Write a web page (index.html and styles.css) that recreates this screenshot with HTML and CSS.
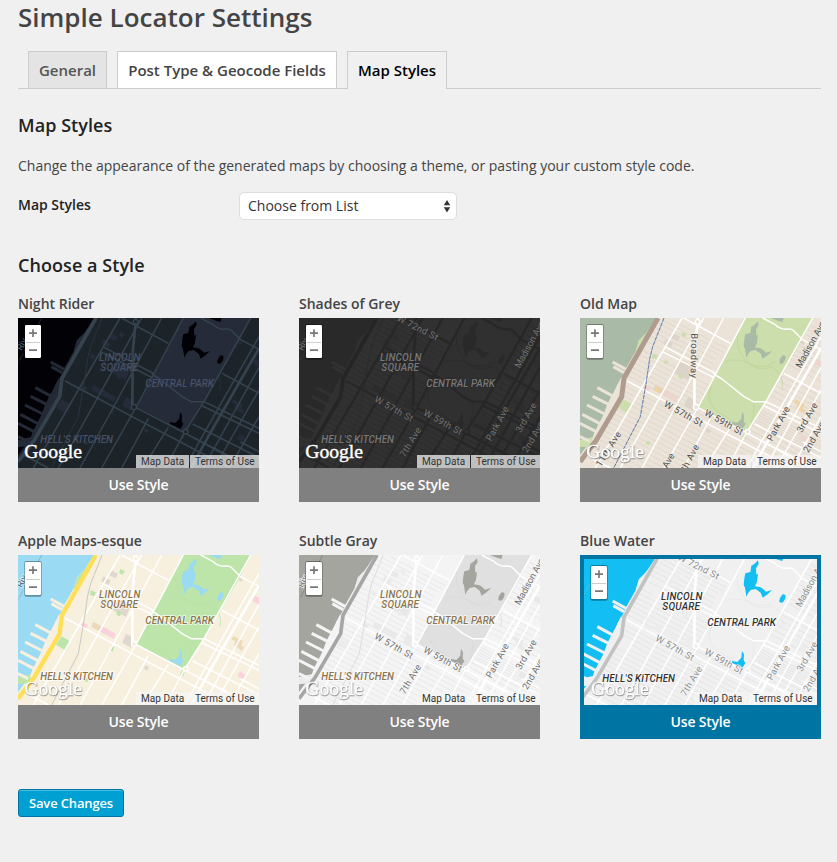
FILE: index.html
```html
<!DOCTYPE html>
<html lang="en">
<head>
<meta charset="utf-8">
<title>Simple Locator Settings</title>
<link rel="stylesheet" href="styles.css">
</head>
<body>
<svg class="defs" aria-hidden="true">
  <defs>
    <!-- Terrain is drawn at three units per pixel -->
    <g id="terrain">
      <path class="land" d="M24 84h730v460H24z"/>
      <path class="minor" d="M200 175 760 472M193 188 760 489M186 202 760 506M178 214 760 523M170 226 760 540M163 238 740 545M160 253 710 545M240 107 430 208M232 119 424 222M225 132 418 235M216 150 410 252M248 93 440 194M270 90 455 188M300 90 462 175M150 283 640 543M150 299 612 544M142 311 580 543M134 324 548 543M126 337 515 543M119 350 483 543M112 363 452 543M105 376 420 543M98 389 388 543M90 401 358 543M82 414 326 543M74 427 294 543M65 439 262 543M55 451 230 543M46 463 198 543M36 475 166 543M715 105 760 129M708 119 760 146M700 133 760 164M680 165 760 207M671 180 760 227M663 194 760 245M655 208 760 263M646 222 760 282M628 257 760 326M620 272 760 345M612 287 760 364M602 301 760 383M593 315 760 402M570 362 760 461M562 376 760 479M554 390 760 497"/>
      <path class="grey" d="m250 285 42 22-6 15-42-23zM306 235l20-25 38 20-16 40-42-22zM348 320l22 12-6 30-28-15zM407 414l10 6-6 11-10-7zM690 152l8 5-4 8-9-6zM280 148l22 12-6 14-22-12zM304 130l20 10-7 14-20-9z"/>
      <path class="tan" d="m252 287 18 9-6 14-18-9zM670 328l28 14-4 14 8 5-6 10-24-16 4-12-12-6z"/>
      <path class="pink" d="m276 297 42 24-7 15-42-23zM218 286l16 8-8 14-15-8zM735 206l12 6v20l-20-10zM690 433l16 10-8 13-16-9z"/>
      <path class="green" d="m330 125 14 8-6 10-10-5zM242 190l16 6-6 12-12-4zM322 250l14 6-7 12-10-5zM278 211l12 4-4 8-10-4zM155 328l25 15-12 28-30-18zM226 452l10 5-5 9-10-5zM518 425l8 5-6 18-10-5zM305 356l8 4-5 14-7-4z"/>
      <path class="park" d="M520 84H722L690 150 582 335 525 428 380 350 430 254z"/>
      <path class="path" d="M500 120q-15 50 20 90t80 20q40 25 30 70M420 290q-30 50 40 90t60 20M460 215q30-10 60 0 50 30 90 0M530 420q20-50 15-85"/>
      <path class="lake" d="M558 94 560 105 552 118 553 137 558 134 555 158 549 172 566 175 576 182 582 188 600 183 587 196 572 206 566 191 551 180 536 183 528 193 523 203 519 176 515 167 517 148 520 133 535 129 538 110 547 105zM632 196q8-1 9 5 0 10-8 19-8 3-11-2-1-10 10-22M510 366l6 10-1 18 5 8-9 15-15-8-16-7v-6l16 3 12-13zM597 84h38l-4 12-11-3z"/>
      <path class="water" d="M24 84H252L222 130 201 151 191 184 162 235 150 262 137 282 120 320 95 380 65 440 24 495z"/>
      <path class="green" d="M246 100 222 130 201 151 191 184 204 185 240 125zM146 265 130 305 118 326 126 330 150 310zM24 450 66 440 60 468 24 472z"/>
      <path class="pier" d="m122 216 40 22M124 230l32 18M76 293l55 30M62 319l60 30M45 345l65 33M31 373l64 34M24 400l54 28M24 440l30 15"/>
      <path class="apron" d="M148 260 134 290 115 325 105 345 94 375 68 425 58 455 80 430 145 320z"/>
      <path class="river" d="M95 84 24 220"/>
      <path class="road" d="M330 84 205 300 70 534M395 84 262 325 145 534M455 84 322 330 210 534M520 84 382 345 275 534M415 385 335 534M475 412 398 534M722 84 582 335 525 425 466 534M747 140 565 460 525 534M747 232 580 534M747 300 612 534M747 380 658 534M165 273 372 383 580 492 660 534M372 350 522 428 727 534M335 84 475 160M278 170 430 250M270 184 425 262M636 250 747 310M582 335 747 415M577 348 747 430M522 428 747 550M548 402 747 503M692 456 747 485M40 495 115 534M572 84l38 20q12 12 30 14 18-3 25 4l25 26 57 30M425 252l25 15 66 53 28 15h38"/>
      <path class="major" d="M377 84v12L368 190 367 345M747 175 600 430 543 534"/>
      <path class="rail-bed" d="M276 84 242 170 233 206 223 275 205 380 125 534"/>
      <path class="rail" d="M276 84 242 170 233 206 223 275 205 380 125 534"/>
      <path class="hwy" d="M258 84 156 265 149 320 72 452 24 515"/>
      <circle class="ring" cx="372" cy="351" r="8"/><circle class="ring" cx="377" cy="95" r="7"/><circle class="ring" cx="527" cy="425" r="7"/>
    </g>
    <g id="zoomer">
      <rect class="zoom-shadow" x="43" y="102" width="52" height="107" rx="6"/>
      <rect class="zoom-box" x="45" y="105" width="48" height="99" rx="4"/>
      <path class="zoom-line" d="M48 157.500h42"/>
      <path class="zoom-sign" d="M57 129.500h24M69 118v23M57 180.500h24"/>
    </g>
  </defs>
</svg>

<main class="wrap">
  <h1>Simple Locator Settings</h1>
  <nav class="tabs">
    <a class="tab t-general">General</a>
    <a class="tab t-fields">Post Type &amp; Geocode Fields</a>
    <a class="tab t-active">Map Styles</a>
  </nav>
  <h2>Map Styles</h2>
  <p class="intro"><span>Change the appearance of the generated maps by choosing a theme, or pasting your custom style code.</span></p>
  <div class="field">
    <span class="field-label">Map Styles</span>
    <div class="select"><span>Choose from List</span>
      <svg width="8" height="13" viewBox="0 0 8 13"><path d="M4 0 7.200 5.200H.8zM4 12.500 7.200 7.300H.8z" fill="#333"/></svg>
    </div>
  </div>
  <h2 class="choose">Choose a Style</h2>

  <section class="grid-cards">
    <article class="card night">
      <h3>Night Rider</h3>
      <div class="map"><svg viewBox="24 84 723 450">
        <use href="#terrain"/>
        <g class="street"><text transform="translate(35 184) rotate(-62)">Riv</text></g>
        <g class="area"><text x="267" y="214" textLength="124">LINCOLN</text><text x="271" y="243" textLength="113">SQUARE</text><text x="406" y="292" textLength="206">CENTRAL PARK</text><text x="91" y="460" textLength="218">HELL'S KITCHEN</text></g>
        <text class="google" x="43" y="503" textLength="173">Google</text>
        <use href="#zoomer"/>
      </svg><div class="credits"><span>Map Data</span><span>Terms of Use</span></div></div>
      <button>Use Style</button>
    </article>

    <article class="card shades">
      <h3>Shades of Grey</h3>
      <div class="map"><svg viewBox="24 84 723 450">
        <use href="#terrain"/>
        <g class="street"><text transform="translate(35 184) rotate(-62)">Riv</text><text transform="translate(316 91) rotate(27)" textLength="134">W 72nd St</text><text transform="translate(248 334) rotate(29)" textLength="128">W 57th St</text><text transform="translate(395 374) rotate(29)" textLength="128">W 59th St</text><text transform="translate(341 503) rotate(-59)" textLength="98">7th Ave</text><text transform="translate(600 455) rotate(-61)" textLength="113">Park Ave</text><text transform="translate(689 430) rotate(-60)" textLength="98">3rd Ave</text><text transform="translate(709 490) rotate(-60)" textLength="102">2nd Ave</text><text transform="translate(686 236) rotate(-61)" textLength="155">Madison Ave</text></g>
        <g class="area"><text x="267" y="214" textLength="124">LINCOLN</text><text x="271" y="243" textLength="113">SQUARE</text><text x="406" y="292" textLength="206">CENTRAL PARK</text><text x="91" y="460" textLength="218">HELL'S KITCHEN</text></g>
        <text class="google" x="43" y="503" textLength="173">Google</text>
        <use href="#zoomer"/>
      </svg><div class="credits"><span>Map Data</span><span>Terms of Use</span></div></div>
      <button>Use Style</button>
    </article>

    <article class="card old">
      <h3>Old Map</h3>
      <div class="map"><svg viewBox="24 84 723 450">
        <use href="#terrain"/>
        <g class="street"><text transform="translate(358 130) rotate(91)" textLength="134">Broadway</text><text transform="translate(274 348) rotate(29)" textLength="128">W 57th St</text><text transform="translate(395 374) rotate(29)" textLength="128">W 59th St</text><text transform="translate(86 532) rotate(-58)" textLength="118">11th Ave</text><text transform="translate(286 536) rotate(-60)">Ave</text><text transform="translate(334 560) rotate(-62)" textLength="102">7th Ave</text><text transform="translate(600 455) rotate(-61)" textLength="113">Park Ave</text><text transform="translate(689 430) rotate(-60)" textLength="98">3rd Ave</text><text transform="translate(709 490) rotate(-60)" textLength="102">2nd Ave</text><text transform="translate(686 236) rotate(-61)" textLength="155">Madison Ave</text></g>
        <text class="google" x="43" y="503" textLength="173">Google</text>
        <use href="#zoomer"/>
      </svg><div class="credits"><span>Map Data</span><span>Terms of Use</span></div></div>
      <button>Use Style</button>
    </article>

    <article class="card apple">
      <h3>Apple Maps-esque</h3>
      <div class="map"><svg viewBox="24 84 723 450">
        <use href="#terrain"/>
        <g class="street"><text transform="translate(35 184) rotate(-62)">Riv</text></g>
        <g class="area"><text x="267" y="214" textLength="124">LINCOLN</text><text x="271" y="243" textLength="113">SQUARE</text><text x="406" y="292" textLength="206">CENTRAL PARK</text><text x="91" y="460" textLength="218">HELL'S KITCHEN</text></g>
        <text class="google" x="43" y="503" textLength="173">Google</text>
        <use href="#zoomer"/>
      </svg><div class="credits"><span>Map Data</span><span>Terms of Use</span></div></div>
      <button>Use Style</button>
    </article>

    <article class="card subtle">
      <h3>Subtle Gray</h3>
      <div class="map"><svg viewBox="24 84 723 450">
        <use href="#terrain"/>
        <g class="street"><text transform="translate(35 184) rotate(-62)">Riv</text><text transform="translate(248 334) rotate(29)" textLength="128">W 57th St</text><text transform="translate(395 374) rotate(29)" textLength="128">W 59th St</text><text transform="translate(341 503) rotate(-59)" textLength="98">7th Ave</text><text transform="translate(600 455) rotate(-61)" textLength="113">Park Ave</text><text transform="translate(689 430) rotate(-60)" textLength="98">3rd Ave</text><text transform="translate(709 490) rotate(-60)" textLength="102">2nd Ave</text><text transform="translate(686 236) rotate(-61)" textLength="155">Madison Ave</text></g>
        <g class="area"><text x="267" y="214" textLength="124">LINCOLN</text><text x="271" y="243" textLength="113">SQUARE</text><text x="406" y="292" textLength="206">CENTRAL PARK</text><text x="91" y="460" textLength="218">HELL'S KITCHEN</text></g>
        <text class="google" x="43" y="503" textLength="173">Google</text>
        <use href="#zoomer"/>
      </svg><div class="credits"><span>Map Data</span><span>Terms of Use</span></div></div>
      <button>Use Style</button>
    </article>

    <article class="card blue selected">
      <h3>Blue Water</h3>
      <div class="map"><svg viewBox="36 90 699 438">
        <use href="#terrain"/>
        <g class="street"><text transform="translate(316 91) rotate(27)" textLength="134">W 72nd St</text><text transform="translate(248 334) rotate(29)" textLength="128">W 57th St</text><text transform="translate(395 374) rotate(29)" textLength="128">W 59th St</text><text transform="translate(341 503) rotate(-59)" textLength="98">7th Ave</text><text transform="translate(600 455) rotate(-61)" textLength="113">Park Ave</text><text transform="translate(689 430) rotate(-60)" textLength="98">3rd Ave</text><text transform="translate(709 490) rotate(-60)" textLength="102">2nd Ave</text><text transform="translate(686 236) rotate(-61)" textLength="155">Madison Ave</text></g>
        <g class="area"><text x="267" y="214" textLength="124">LINCOLN</text><text x="271" y="243" textLength="113">SQUARE</text><text x="406" y="292" textLength="206">CENTRAL PARK</text><text x="91" y="460" textLength="218">HELL'S KITCHEN</text></g>
        <text class="google" x="57" y="498" textLength="173">Google</text>
        <use href="#zoomer" x="12" y="6"/>
      </svg><div class="credits"><span>Map Data</span><span>Terms of Use</span></div></div>
      <button>Use Style</button>
    </article>
  </section>

  <button class="save">Save Changes</button>
</main>
</body>
</html>
```
FILE: styles.css
```css
* { box-sizing: border-box; }
body {
  margin: 0;
  background: #f0f0f0;
  color: #444;
  font: 14px/20px "Open Sans", sans-serif;
}
.defs { position: absolute; width: 0; height: 0; }
.wrap { padding: 0 16px 0 18px; height: 862px; overflow: hidden; }
h1, h2, h3, p { margin: 0; }
h1 { padding-top: 1px; font-size: 26px; line-height: 32px; font-weight: 600; white-space: nowrap; }
.tabs {
  display: flex;
  gap: 10px;
  margin-top: 18px;
  padding-left: 10px;
  height: 38px;
  border-bottom: 1px solid #ccc;
}
.tab {
  height: 37px;
  border: 1px solid #ccc;
  border-bottom: 0;
  font-size: 15px;
  line-height: 37px;
  font-weight: 600;
  text-align: center;
  white-space: nowrap;
}
.t-general { width: 79px; background: #e4e4e4; color: #555; }
.t-fields { width: 220px; background: #fff; }
.t-active { width: 100px; height: 38px; background: #f0f0f0; color: #000; }
h2 { margin-top: 23px; font-size: 18px; line-height: 26px; font-weight: 600; color: #222; letter-spacing: .06px; }
.intro { margin-top: 18px; white-space: nowrap; }
.field { display: flex; margin-top: 16px; height: 28px; }
.field-label { width: 221px; padding-top: 3px; font-weight: 600; color: #222; }
.select {
  display: flex;
  align-items: center;
  justify-content: space-between;
  width: 218px;
  height: 28px;
  padding: 0 5px 0 8px;
  border: 1px solid #ddd;
  border-radius: 5px;
  background: #fff;
  color: #333;
}
.choose { margin-top: 32px; }
.grid-cards { display: grid; grid-template-columns: repeat(3, 241px); gap: 29px 40px; margin-top: 16px; }
h3 { height: 24px; font-size: 14px; line-height: 20px; font-weight: 600; color: #444; }
.map { position: relative; height: 150px; overflow: hidden; }
.map svg { display: block; width: 100%; height: 100%; }
.card button {
  display: block;
  width: 100%;
  height: 34px;
  padding: 0;
  border: 0;
  background: #808080;
  color: #fff;
  font: 600 14px/34px "Open Sans", sans-serif;
  letter-spacing: -.2px;
}
.selected .map { border: 4px solid #0074a2; border-bottom: 0; }
.card.selected button { background: #0074a2; }
.credits {
  position: absolute;
  right: 0;
  bottom: 0;
  display: flex;
  gap: 1px;
  font: 10px/13px Roboto, sans-serif;
  letter-spacing: .04px;
  color: #333;
  white-space: nowrap;
}
.credits span { width: 53px; height: 13px; padding-left: 5px; background: var(--credit); }
.credits span + span { width: 69px; }
.save {
  display: block;
  width: 106px;
  height: 28px;
  margin-top: 50px;
  padding: 0;
  border: 1px solid #0074a2;
  border-radius: 3px;
  background: #00a0d2;
  box-shadow: inset 0 1px 0 #48bde0;
  color: #fff;
  font: 600 13px/26px "Open Sans", sans-serif;
  letter-spacing: -.15px;
}

/* Map drawing */
.land { fill: var(--land); }
.minor { fill: none; stroke: var(--minor); stroke-width: 2; }
.park { fill: var(--park); }
.path { fill: none; stroke: var(--path); stroke-width: 2; }
.water { fill: var(--water); }
.lake { fill: var(--lake, var(--water)); }
.green { fill: var(--green, var(--park)); }
.grey { fill: var(--grey); }
.tan { fill: var(--tan, var(--grey)); }
.pink { fill: var(--pink, var(--grey)); }
.pier { fill: none; stroke: var(--pier, var(--land)); stroke-width: 9; }
.apron { fill: var(--pier, var(--land)); }
.river { stroke: var(--river); stroke-width: 2; stroke-dasharray: 24 6; }
.road { fill: none; stroke: var(--road); stroke-width: var(--road-w, 4.500); stroke-linejoin: round; }
.major { fill: none; stroke: var(--road); stroke-width: 8; }
.rail-bed { fill: none; stroke: var(--rail-bed, transparent); stroke-width: 3; }
.rail { fill: none; stroke: var(--rail); stroke-width: 3; stroke-dasharray: var(--rail-dash, none); }
.hwy { fill: none; stroke: var(--hwy); stroke-width: var(--hwy-w, 11); stroke-linejoin: round; }
.ring { fill: var(--land); stroke: var(--road); stroke-width: 4; }
.street { fill: var(--street); stroke: var(--halo); stroke-width: 4; paint-order: stroke; font: 28px Roboto, sans-serif; }
.area { fill: var(--area); stroke: var(--halo); stroke-width: 5; paint-order: stroke; font: italic 500 30px Roboto, sans-serif; }
.google {
  fill: #fff;
  stroke: #fff;
  stroke-width: 1.200;
  font: 59px "Liberation Serif", serif;
  filter: var(--logo-shadow, drop-shadow(1px 2px 2px rgba(0, 0, 0, .55)));
}
.zoom-shadow { fill: rgba(0, 0, 0, .35); }
.zoom-box { fill: #fff; }
.zoom-line { stroke: #ccc; stroke-width: 3; }
.zoom-sign { stroke: #777; stroke-width: 5; }

.night {
  --land: #1d2429; --park: #252b38; --water: #010106; --road: #35434f; --minor: #1f272c; --pier: #232a36;
  --path: #282f3b; --grey: #252b38; --hwy: #35434f; --rail: #29333b; --river: #303b44;
  --street: #4d6175; --area: #465067; --halo: transparent; --credit: rgba(255, 255, 255, .7); --logo-shadow: none;
}
.shades {
  --land: #313131; --park: #303030; --water: #292929; --road: #272727; --minor: #2a2a2a;
  --path: #282828; --grey: #2d2d2d; --hwy: #252525; --rail: #2b2b2b; --river: #3a3a3a; --road-w: 7;
  --street: #747474; --area: #787878; --halo: #2a2a2a; --credit: rgba(255, 255, 255, .7); --logo-shadow: none;
}
.old {
  --land: #ebe3d8; --park: #cbdeab; --water: #a9baa6; --road: #fff; --minor: #dbd2c7;
  --path: #bad196; --grey: #ddd4c9; --tan: #edd3a5; --pink: #edd5cd; --hwy: #b09c8e; --hwy-w: 15;
  --rail: #6680a8; --rail-dash: 12 3; --rail-bed: #c5ccd3; --river: transparent; --street: #505050;
  --halo: #f0eae2; --credit: rgba(245, 245, 245, .7);
}
.apple {
  --land: #f7f0df; --park: #bde5aa; --water: #9bdaf3; --road: #fff; --minor: #f7f0df;
  --path: #b9dfa7; --grey: #dfd8cf; --tan: #eddab9; --pink: #fbd1dc; --hwy: #ffdf56; --hwy-w: 13;
  --rail: #cbc7c0; --river: #7f9eaa; --street: #386779; --area: #8b7550;
  --halo: rgba(255, 255, 255, .8); --credit: rgba(245, 245, 245, .7);
}
.subtle {
  --land: #f4f4f4; --park: #e0e0e0; --water: #a4a59f; --road: #fff; --minor: #e2e2e2;
  --path: #d8d8d8; --green: #ececec; --grey: #e9e9e9; --hwy: #a6a6a6; --rail: #ddd; --river: #777;
  --street: #707070; --area: #8b7550; --halo: #fafafa; --credit: rgba(245, 245, 245, .7);
}
.blue {
  --land: #f0f0f0; --park: #f0f0f0; --water: #13bff2; --road: #fff; --minor: #e0e0e0;
  --path: #e5e5e5; --grey: #ededed; --hwy: #c2c2c2; --rail: #eee; --river: #7ab3c7;
  --street: #8b8b8b; --area: #333; --halo: #fafafa; --credit: rgba(245, 245, 245, .7);
}
```
